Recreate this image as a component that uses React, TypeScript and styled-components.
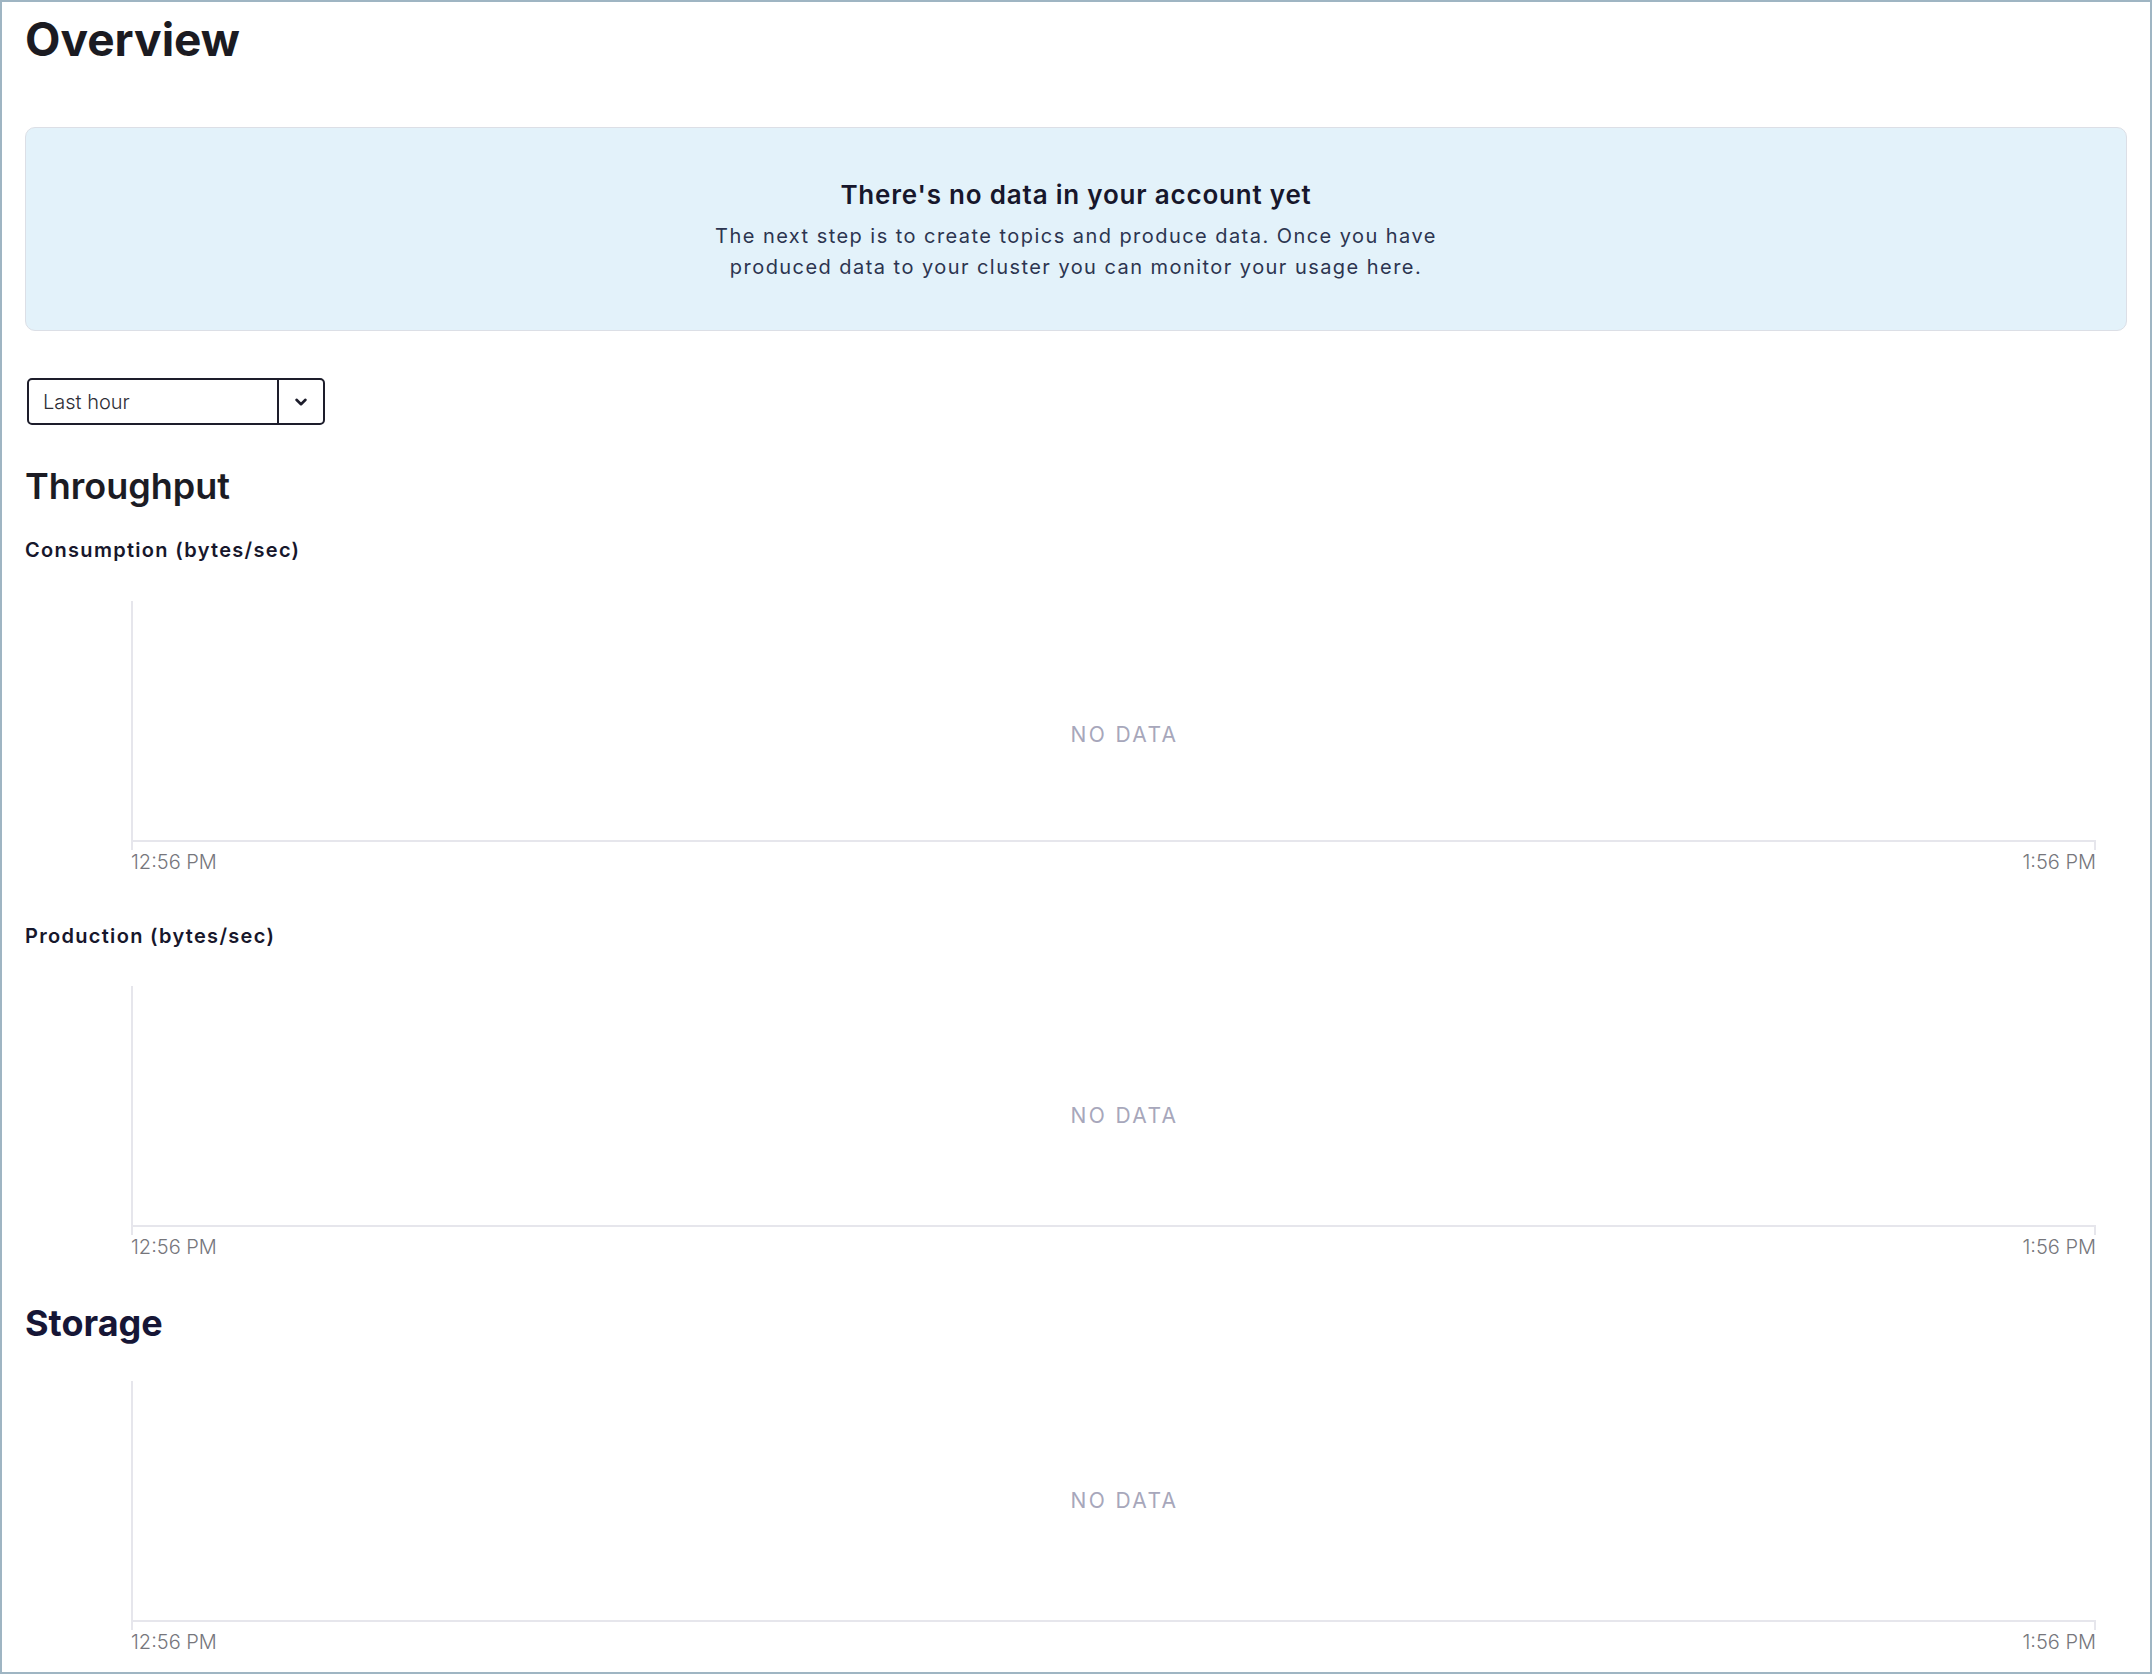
import React from 'react'
import styled, { createGlobalStyle } from 'styled-components'

const GlobalStyle = createGlobalStyle`
    html, body {
        margin: 0;
        padding: 0;
        background: #ffffff;
    }
    body {
        font-family: Inter, "Noto Sans", "Liberation Sans", sans-serif;
        color: #1c1c24;
    }
`;

const Frame = styled.div`
    box-sizing: border-box;
    width: 2152px;
    height: 1674px;
    border: 2px solid #9fb5c3;
    padding: 8px 23px 0 23px;
    overflow: hidden;
    display: flex;
    flex-direction: column;
`;

const PageTitle = styled.h1`
    margin: 0;
    font-size: 46px;
    line-height: 58px;
    font-weight: 700;
    color: #1b1b22;
`;

const Banner = styled.div`
    margin-top: 59px;
    box-sizing: border-box;
    height: 204px;
    background: #e3f2fa;
    border: 1px solid #dcdfe6;
    border-radius: 10px;
    display: flex;
    flex-direction: column;
    align-items: center;
    justify-content: center;
    text-align: center;
    padding-top: 4px;
`;

const BannerTitle = styled.div`
    font-size: 26px;
    line-height: 32px;
    font-weight: 600;
    letter-spacing: 0.8px;
    color: #17172c;
    margin-bottom: 10px;
`;

const BannerText = styled.p`
    margin: 0;
    font-size: 20px;
    line-height: 31.5px;
    letter-spacing: 1.45px;
    color: #2c3550;
`;

const Select = styled.div`
    margin-top: 47px;
    margin-left: 2px;
    box-sizing: border-box;
    width: 298px;
    height: 47px;
    border: 2px solid #1d1d2b;
    border-radius: 5px;
    display: flex;
    align-items: stretch;
`;

const SelectValue = styled.div`
    flex: 1;
    display: flex;
    align-items: center;
    padding-left: 14px;
    font-size: 20px;
    font-weight: 300;
    color: #2e2e36;
`;

const SelectArrow = styled.div`
    width: 44px;
    border-left: 2px solid #1d1d2b;
    display: flex;
    align-items: center;
    justify-content: center;
`;

const SectionTitle = styled.h2<{ $tone?: string }>`
    margin: ${p => p.$tone ? '42px' : '39px'} 0 0 0;
    font-size: 36px;
    line-height: 44px;
    font-weight: ${p => p.$tone ? 700 : 600};
    color: ${p => p.$tone || '#1c1c24'};
`;

const ChartLabel = styled.div<{ $gap: number }>`
    margin-top: ${p => p.$gap}px;
    font-size: 20px;
    line-height: 24px;
    font-weight: 600;
    letter-spacing: 1.3px;
    color: #17172c;
`;

const Chart = styled.div<{ $gap: number }>`
    margin: ${p => p.$gap}px 31px 0 106px;
    display: flex;
    flex-direction: column;
`;

const Plot = styled.div`
    box-sizing: border-box;
    height: 241px;
    border-left: 2px solid #e6e6ec;
    border-bottom: 2px solid #e6e6ec;
    display: flex;
    align-items: center;
    justify-content: center;
    padding-left: 20px;
`;

const NoData = styled.span<{ $shift: number }>`
    margin-top: ${p => p.$shift * 2}px;
    font-size: 21px;
    letter-spacing: 2.4px;
    color: #a7a7bb;
`;

const Ticks = styled.div`
    height: 8px;
    border-left: 2px solid #e6e6ec;
    border-right: 2px solid #e6e6ec;
`;

const AxisLabels = styled.div`
    display: flex;
    justify-content: space-between;
    font-size: 20px;
    line-height: 24px;
    font-weight: 300;
    color: #76767c;
`;

const Chevron = () => (
    <svg width="14" height="10" viewBox="0 0 14 10" fill="none">
        <path d="M2.5 2.8 L7 7.2 L11.5 2.8" stroke="#1d1d2b" strokeWidth="2.6" strokeLinecap="round" strokeLinejoin="round" />
    </svg>
);

const EmptyChart = ({ gap, shift }: { gap: number, shift: number }) => (
    <Chart $gap={gap}>
        <Plot>
            <NoData $shift={shift}>NO DATA</NoData>
        </Plot>
        <Ticks />
        <AxisLabels>
            <span>12:56 PM</span>
            <span>1:56 PM</span>
        </AxisLabels>
    </Chart>
);

export default function App() {
    return (
        <>
            <GlobalStyle />
            <Frame>
                <PageTitle>Overview</PageTitle>

                <Banner>
                    <BannerTitle>There's no data in your account yet</BannerTitle>
                    <BannerText>
                        The next step is to create topics and produce data. Once you have
                        <br />
                        produced data to your cluster you can monitor your usage here.
                    </BannerText>
                </Banner>

                <Select>
                    <SelectValue>Last hour</SelectValue>
                    <SelectArrow>
                        <Chevron />
                    </SelectArrow>
                </Select>

                <SectionTitle>Throughput</SectionTitle>
                <ChartLabel $gap={30}>Consumption (bytes/sec)</ChartLabel>
                <EmptyChart gap={39} shift={14} />

                <ChartLabel $gap={50}>Production (bytes/sec)</ChartLabel>
                <EmptyChart gap={38} shift={10} />

                <SectionTitle $tone="#161636">Storage</SectionTitle>
                <EmptyChart gap={36} shift={0} />
            </Frame>
        </>
    )
}
